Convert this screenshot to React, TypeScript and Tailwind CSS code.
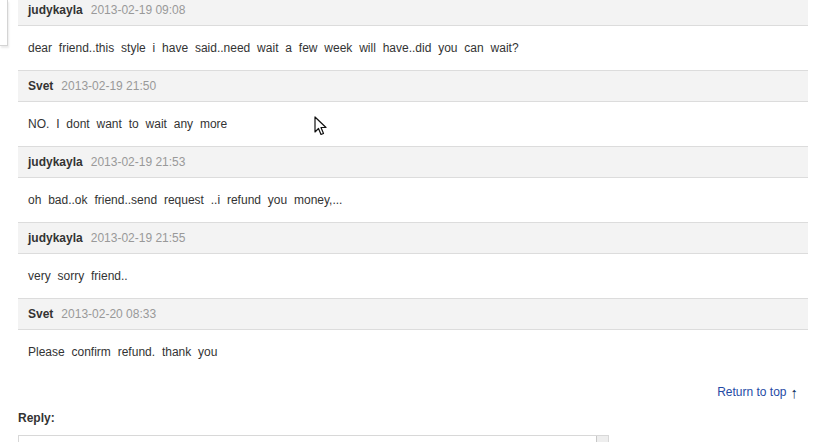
const messages = [
  { author: 'judykayla', date: '2013-02-19 09:08', text: 'dear friend..this style i have said..need wait a few week will have..did you can wait?' },
  { author: 'Svet', date: '2013-02-19 21:50', text: 'NO. I dont want to wait any more' },
  { author: 'judykayla', date: '2013-02-19 21:53', text: 'oh bad..ok friend..send request ..i refund you money,...' },
  { author: 'judykayla', date: '2013-02-19 21:55', text: 'very sorry friend..' },
  { author: 'Svet', date: '2013-02-20 08:33', text: 'Please confirm refund. thank you' },
];

function Cursor() {
  return (
    <svg className="absolute left-[314px] top-[116px]" width="14" height="21" viewBox="0 0 14 21">
      <path
        d="M1 1 L1 16 L4.5 12.5 L7 18.5 L9.5 17.5 L7 11.5 L12 11.5 Z"
        fill="#fff"
        stroke="#111"
        strokeWidth="1.2"
        strokeLinejoin="round"
      />
    </svg>
  );
}

export default function App() {
  return (
    <div className="relative h-[442px] w-[839px] overflow-hidden bg-white font-['Liberation_Sans',Arial,sans-serif] text-[12px] text-[#333]">
      <div className="flex">
        <div className="w-[8px] shrink-0">
          <div className="h-[46px] border-r border-b border-[#d4d4d4] shadow-[1px_2px_2px_#ebebeb]" />
        </div>
        <div className="ml-[10px] w-[790px]">
          <div className="-mt-[6px]">
            {messages.map((m, i) => (
              <div key={i}>
                <div className="flex h-[32px] items-center gap-[8px] border-y border-[#dcdcdc] bg-[#f3f3f3] px-[10px]">
                  <span className="font-bold text-[#333]">{m.author}</span>
                  <span className="text-[#999]">{m.date}</span>
                </div>
                <div className="flex h-[44px] items-center px-[10px] [word-spacing:3.5px]">{m.text}</div>
              </div>
            ))}
          </div>
          <div className="mt-[9px] flex justify-end pr-[10px]">
            <a className="flex items-center gap-[4px] text-[#1f4ba5]" href="#top">
              Return to top <span className="text-[15px] leading-none text-[#0b2a5c]">↑</span>
            </a>
          </div>
          <div className="mt-[8px] font-bold">Reply:</div>
          <div className="mt-[8px] flex h-[40px] w-[591px] border border-[#d8d8d8]">
            <div className="flex-1" />
            <div className="h-[10px] w-[12px] border-l border-b border-[#c8c8c8] bg-[#eee]" />
          </div>
        </div>
      </div>
      <Cursor />
    </div>
  );
}
